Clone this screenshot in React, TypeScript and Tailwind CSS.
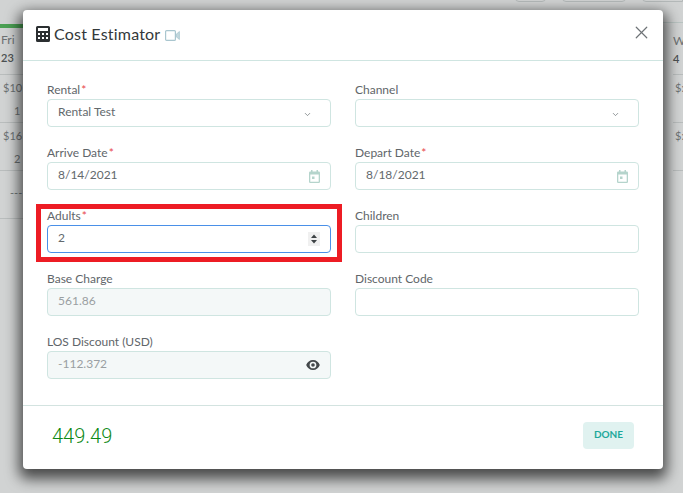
import { ChevronDown, X } from "lucide-react";

const font = "font-['Lato','Noto_Sans',sans-serif]";

function Label({ text, required }: { text: string; required?: boolean }) {
  return (
    <div className="h-[19px] text-[12px] leading-[19px] text-[#5f666a]">
      {text}
      {required && <span className="ml-[1px] text-[#e8474c]">*</span>}
    </div>
  );
}

function Field({
  label,
  required,
  value,
  disabled,
  icon,
}: {
  label: string;
  required?: boolean;
  value?: string;
  disabled?: boolean;
  icon?: React.ReactNode;
}) {
  return (
    <div className="h-[63px]">
      <Label text={label} required={required} />
      <div
        className={`flex h-[28px] items-center justify-between rounded-[4px] border border-[#cfe5e1] pl-[10px] pr-[9px] text-[12px] ${
          disabled ? "bg-[#f4f8f8] text-[#9a9fa2]" : "bg-white text-[#63696d]"
        }`}
      >
        <span className="mt-[-3px]">{value}</span>
        {icon}
      </div>
    </div>
  );
}

const chevron = <ChevronDown size={9} strokeWidth={2} className="mr-[9px] mt-[3px] text-[#70777a]" />;
const calendar = (
  <svg width="11" height="13" viewBox="0 0 11 13" className="mr-[1px] mt-[1px]">
    <path
      fillRule="evenodd"
      fill="#b5d4cc"
      d="M2 0h1.500v1.500h4V0H9v1.500h.8A1.200 1.200 0 0 1 11 2.700v9.100A1.200 1.200 0 0 1 9.800 13H1.200A1.200 1.200 0 0 1 0 11.800V2.700A1.200 1.200 0 0 1 1.200 1.500H2ZM1.300 4.500v7.200h8.400V4.500ZM3 6.500h2.500V9H3Z"
    />
  </svg>
);
const eye = (
  <svg width="14" height="10" viewBox="0 0 15 11" className="mr-[1px]">
    <path
      fillRule="evenodd"
      fill="#43484b"
      d="M7.500 0C11 0 13.800 2.300 15 5.500 13.800 8.700 11 11 7.500 11S1.200 8.700 0 5.500C1.200 2.300 4 0 7.500 0Zm0 1.800a3.700 3.700 0 1 0 0 7.400 3.700 3.700 0 0 0 0-7.400Zm0 1.700a2 2 0 1 1 0 4 2 2 0 0 1 0-4Z"
    />
  </svg>
);

function CalendarStrip({ rows, day, date }: { rows: string[][]; day: string; date: string }) {
  return (
    <div className="flex w-[23px] flex-col text-[11px] text-[#6d7273]">
      <div className="h-[27px]" />
      <div className="h-[48px] border-b border-[#b9bdbd] pl-[1px] pt-[4px]">
        <div className="h-[19px] text-[12px]">{day}</div>
        <div className="font-semibold text-[#4c5152]">{date}</div>
      </div>
      {rows.map((r, i) => (
        <div key={i} className="h-[48px] overflow-hidden whitespace-nowrap border-b border-[#b9bdbd] pl-[3px] pt-[5px]">
          {r[0] && <div className="h-[23px]">{r[0]}</div>}
          <div className={r[0] ? "pl-[11px]" : "pl-[7px] pt-[9px]"}>{r[1]}</div>
        </div>
      ))}
    </div>
  );
}

export default function App() {
  return (
    <div className={`relative h-[493px] w-[683px] overflow-hidden bg-[#d1d3d3] ${font}`}>
      {/* page behind the overlay */}
      <div className="flex h-full justify-between">
        <div className="relative">
          <div className="absolute left-0 top-[24px] h-[4px] w-[23px] bg-[#4aa053]" />
          <CalendarStrip day="Fri" date="23" rows={[["$10", "1"], ["$16", "2"], ["", "---"]]} />
        </div>
        <div>
          <div className="h-[23px] border-b border-[#b9c4c2]" />
          <div className="w-[20px] overflow-hidden pl-[10px] pt-[9px] text-[11px] text-[#6d7273]">
            <div className="h-[19px] text-[12px]">W</div>
            <div className="h-[23px] font-semibold text-[#4c5152]">4</div>
            <div className="h-[48px] border-t border-[#b9bdbd] pl-[2px] pt-[5px]">$:</div>
            <div className="h-[48px] border-t border-[#b9bdbd] pl-[2px] pt-[5px]">$:</div>
            <div className="border-t border-[#b9bdbd]" />
          </div>
        </div>
      </div>

      {/* toolbar buttons peeking out at the top */}
      <div className="absolute right-0 top-[-20px] flex gap-[16px]">
        <div className="h-[22px] w-[31px] rounded-[4px] border border-[#b4b9b9]" />
        <div className="h-[22px] w-[64px] rounded-[4px] border border-[#b4b9b9]" />
        <div className="h-[22px] w-[41px] rounded-l-[4px] border border-[#b4b9b9]" />
      </div>

      {/* modal */}
      <div className="absolute left-[23px] top-[10px] flex h-[459px] w-[640px] flex-col rounded-[4px] bg-white shadow-[0_6px_14px_4px_rgba(0,0,0,0.65)]">
        <div className="flex h-[51px] items-center justify-between border-b border-[#cfe5e1] pl-[13px] pr-[11px]">
          <div className="flex items-center">
            <svg width="14" height="16" viewBox="0 0 14 16" className="mt-[-2px]">
              <path
                fillRule="evenodd"
                fill="#2b2f31"
                d="M1.500 0h11A1.500 1.500 0 0 1 14 1.500v13a1.500 1.500 0 0 1-1.500 1.500h-11A1.500 1.500 0 0 1 0 14.500v-13A1.500 1.500 0 0 1 1.500 0ZM2 2v3h10V2ZM2 7v2h2V7Zm4 0v2h2V7Zm4 0v2h2V7ZM2 11v2h2v-2Zm4 0v2h2v-2Zm4 0v2h2v-2Z"
              />
            </svg>
            <span className="ml-[4px] mt-[-2px] text-[16px] tracking-[0.2px] text-[#33383a]">Cost Estimator</span>
            <svg width="15" height="11" viewBox="0 0 15 11" className="ml-[5px]">
              <rect x="0.600" y="0.600" width="9.800" height="9.800" rx="1" fill="none" stroke="#a9c6cf" strokeWidth="1.200" />
              <path d="M11 4.500 14.400 1.500v8L11 6.500Z" fill="#c3d8de" stroke="#a9c6cf" strokeWidth="0.800" />
            </svg>
          </div>
          <X size={21} strokeWidth={1.4} className="mt-[-5px] text-[#6e7376]" />
        </div>

        <div className="grid flex-1 grid-cols-2 content-start gap-x-[24px] px-[24px] pt-[19px]">
          <Field label="Rental" required value="Rental Test" icon={chevron} />
          <Field label="Channel" icon={chevron} />
          <Field label="Arrive Date" required value="8/14/2021" icon={calendar} />
          <Field label="Depart Date" required value="8/18/2021" icon={calendar} />

          <div className="relative h-[63px]">
            <div className="absolute left-[-11px] right-[-11px] top-[-2px] h-[58px] border-[5px] border-[#ed1c24]" />
            <Label text="Adults" required />
            <div className="flex h-[28px] items-center justify-between rounded-[4px] border border-[#4a90e8] pl-[10px] pr-[10px] text-[12px] text-[#63696d]">
              <span className="mt-[-3px]">2</span>
              <svg width="12" height="14" viewBox="0 0 12 14" className="bg-[#f0f0f0]">
                <path d="M6 2.500 9 6H3ZM6 11.500 3 8h6Z" fill="#3d4245" />
              </svg>
            </div>
          </div>
          <Field label="Children" />
          <Field label="Base Charge" value="561.86" disabled />
          <Field label="Discount Code" />
          <Field label="LOS Discount (USD)" value="-112.372" disabled icon={eye} />
        </div>

        <div className="flex h-[64px] items-center justify-between border-t border-[#d3e3e0] pb-[4px] pl-[29px] pr-[29px]">
          <span className="font-['Roboto',sans-serif] text-[20px] font-light text-[#0e8a16]">449.49</span>
          <button className="flex h-[27px] w-[51px] items-center justify-center rounded-[4px] bg-[#e0f2f0] pb-[2px] text-[10px] font-bold text-[#1da89b]">
            DONE
          </button>
        </div>
      </div>
    </div>
  );
}
